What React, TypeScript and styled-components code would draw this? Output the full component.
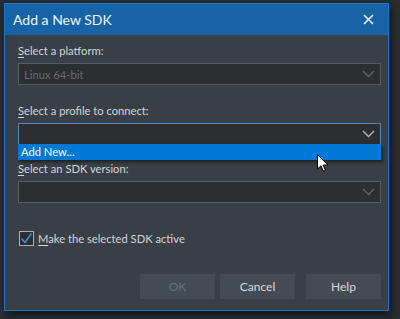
import React from "react";
import styled, { createGlobalStyle } from "styled-components";

const GlobalStyle = createGlobalStyle`
  html, body {
    margin: 0;
    padding: 0;
    background: #2b2c2e;
    width: 400px;
    height: 319px;
    overflow: hidden;
  }
  body {
    font-family: Lato, "Noto Sans", sans-serif;
  }
`;

const Page = styled.div`
  position: relative;
  width: 400px;
  height: 319px;
  padding: 3px 0 0 4px;
  box-sizing: border-box;
`;

const Dialog = styled.div`
  width: 385px;
  height: 308px;
  box-sizing: border-box;
  border: 1px solid #1b78cf;
  background: #383f47;
  box-shadow: 2px 4px 8px rgba(0, 0, 0, 0.55);
  display: flex;
  flex-direction: column;
`;

const TitleBar = styled.div`
  height: 31px;
  background: #1664a7;
  display: flex;
  align-items: center;
  justify-content: space-between;
  padding: 0 14px 0 8px;
  color: #f2f6fa;
  font-size: 14px;
`;

const Body = styled.div`
  flex: 1;
  display: flex;
  flex-direction: column;
  padding: 8px 7px 11px 13px;
  font-size: 11.2px;
`;

const Label = styled.div<{ $top: number }>`
  height: 16px;
  line-height: 16px;
  margin-top: ${(p) => p.$top}px;
  color: #d2d5d8;
`;

const Key = styled.span`
  text-decoration: underline;
  text-underline-offset: 2px;
`;

const SelectWrap = styled.div<{ $top: number }>`
  position: relative;
  margin-top: ${(p) => p.$top}px;
`;

const SelectBox = styled.div<{ $focus?: boolean }>`
  height: 22px;
  box-sizing: border-box;
  border: 1px solid ${(p) => (p.$focus ? "#5a87b0" : "#545c66")};
  background: #2d2e31;
  display: flex;
  align-items: center;
  justify-content: space-between;
  padding: 0 5px 0 5px;
  color: #686b70;
`;

const DropList = styled.div`
  position: absolute;
  left: 0;
  right: 0;
  top: 21px;
  height: 16px;
  background: #0078d7;
  color: #ffffff;
  line-height: 16px;
  padding-left: 3px;
  box-shadow: 2px 2px 3px rgba(0, 0, 0, 0.5);
  z-index: 2;
`;

const CheckRow = styled.label`
  display: flex;
  align-items: center;
  gap: 4px;
  margin-top: 28px;
  margin-left: 1px;
  color: #d2d5d8;
`;

const CheckBox = styled.span`
  width: 15px;
  height: 15px;
  box-sizing: border-box;
  border: 1px solid #a9afb5;
  background: #2d2e31;
  display: flex;
  align-items: center;
  justify-content: center;
`;

const ButtonRow = styled.div`
  margin-top: auto;
  display: flex;
  justify-content: flex-end;
`;

const Button = styled.div<{ $disabled?: boolean; $gap?: number }>`
  width: 75px;
  height: 25px;
  margin-left: ${(p) => p.$gap ?? 0}px;
  background: #434c55;
  color: ${(p) => (p.$disabled ? "#68717a" : "#d8dadc")};
  font-size: 12px;
  display: flex;
  align-items: center;
  justify-content: center;
`;

const Cursor = styled.svg`
  position: absolute;
  left: 317px;
  top: 154px;
  z-index: 5;
`;

const Chevron = ({ color }: { color: string }) => (
  <svg width="13" height="8" viewBox="0 0 13 8">
    <path d="M1 1 L6.5 6.5 L12 1" fill="none" stroke={color} strokeWidth="1.3" />
  </svg>
);

const App = () => {
  return (
    <>
      <GlobalStyle />
      <Page>
        <Dialog>
          <TitleBar>
            <span>Add a New SDK</span>
            <svg width="11" height="11" viewBox="0 0 11 11">
              <path d="M1 1 L10 10 M10 1 L1 10" stroke="#f2f6fa" strokeWidth="1.6" />
            </svg>
          </TitleBar>
          <Body>
            <Label $top={0}>
              <Key>S</Key>elect a platform:
            </Label>
            <SelectWrap $top={4}>
              <SelectBox>
                <span>Linux 64-bit</span>
                <Chevron color="#62666b" />
              </SelectBox>
            </SelectWrap>

            <Label $top={18}>
              <Key>S</Key>elect a profile to connect:
            </Label>
            <SelectWrap $top={4}>
              <SelectBox $focus>
                <span />
                <Chevron color="#b8bcc0" />
              </SelectBox>
              <DropList>Add New...</DropList>
            </SelectWrap>

            <Label $top={16}>
              <Key>S</Key>elect an SDK version:
            </Label>
            <SelectWrap $top={4}>
              <SelectBox>
                <span />
                <Chevron color="#62666b" />
              </SelectBox>
            </SelectWrap>

            <CheckRow>
              <CheckBox>
                <svg width="13" height="13" viewBox="0 0 13 13">
                  <path d="M1.5 6.5 L5 10.5 L11.5 1.5" fill="none" stroke="#3b8fe0" strokeWidth="1.5" />
                </svg>
              </CheckBox>
              <span>
                <Key>M</Key>ake the selected SDK active
              </span>
            </CheckRow>

            <ButtonRow>
              <Button $disabled>OK</Button>
              <Button $gap={5}>Cancel</Button>
              <Button $gap={11}>Help</Button>
            </ButtonRow>
          </Body>
        </Dialog>
        <Cursor width="12" height="19" viewBox="0 0 12 19">
          <path
            d="M0.5 0.5 L0.5 15 L4 11.8 L6.3 17.2 L8.4 16.3 L6.1 11 L10.8 11 Z"
            fill="#ffffff"
            stroke="#000000"
            strokeWidth="1"
            strokeLinejoin="round"
          />
        </Cursor>
      </Page>
    </>
  );
};

export default App;
